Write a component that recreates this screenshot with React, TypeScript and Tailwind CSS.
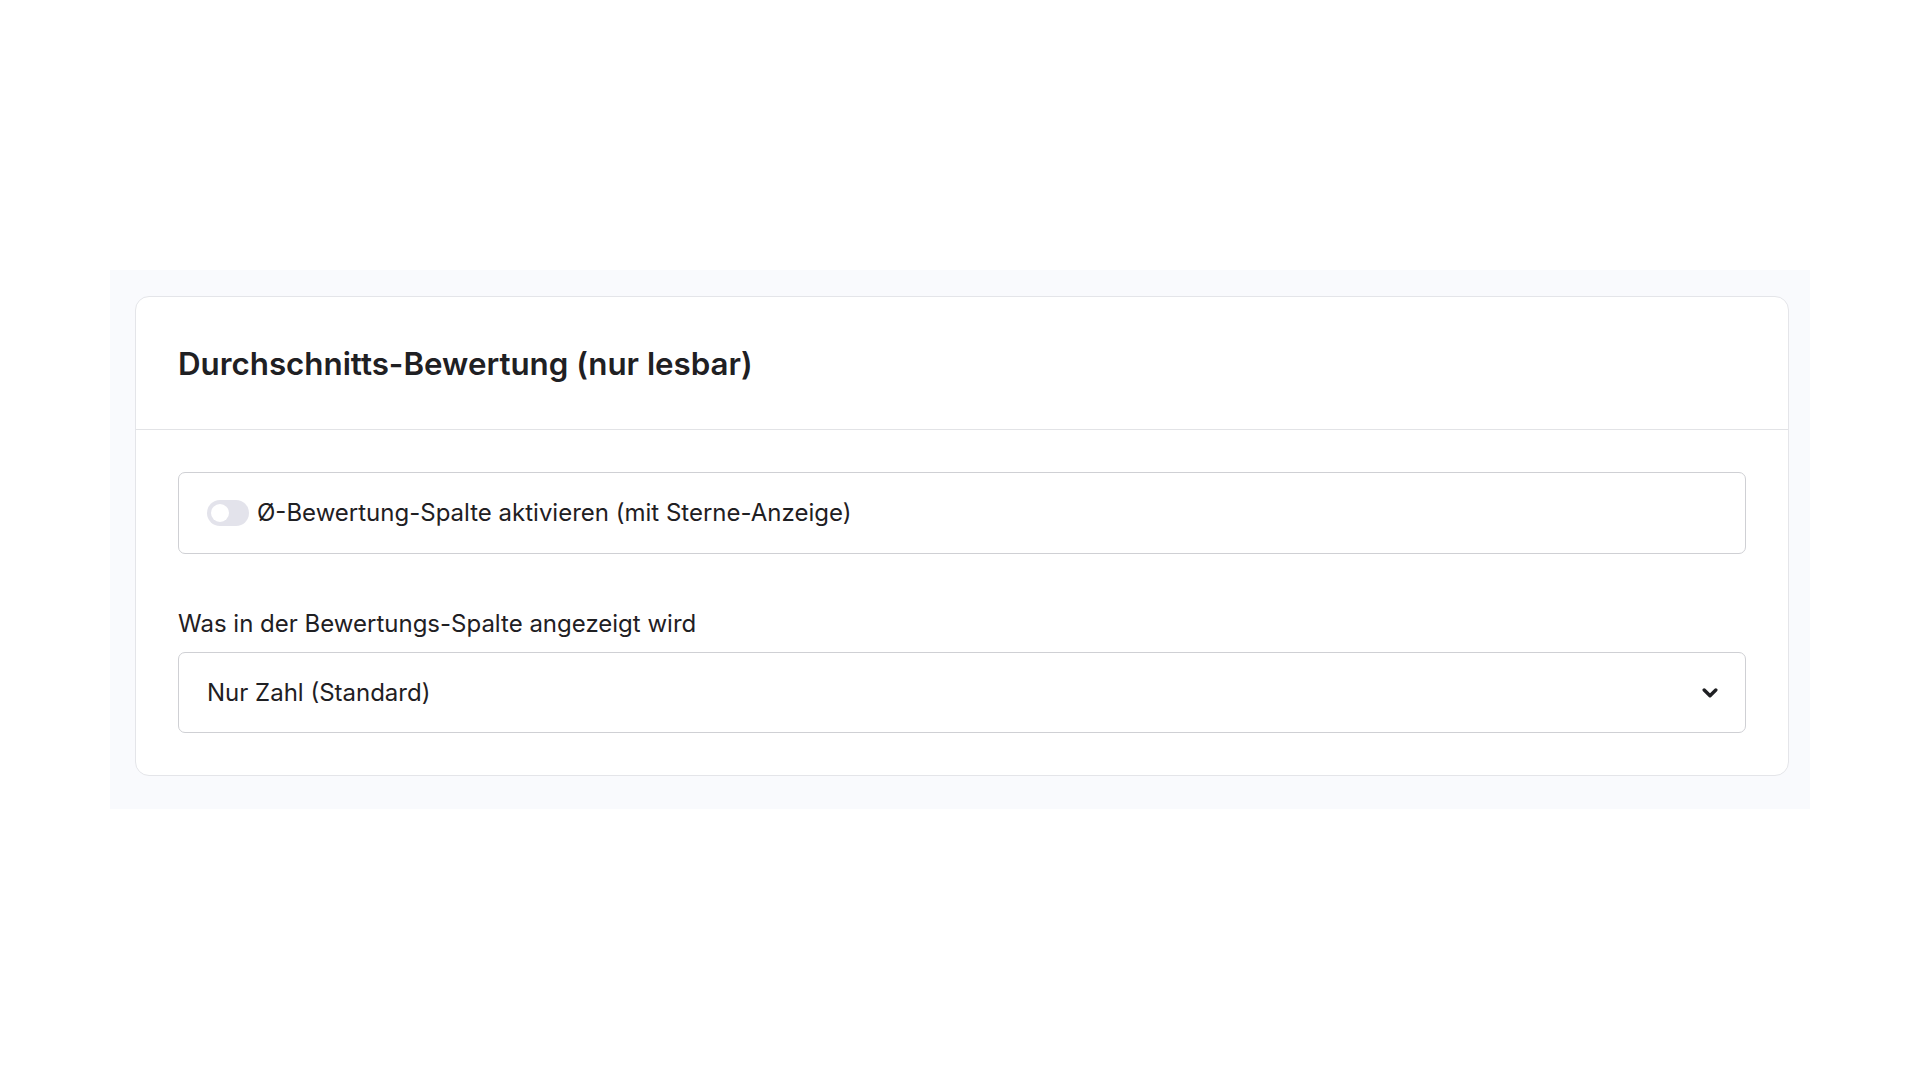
import { useState } from 'react';

const options = ['Nur Zahl (Standard)', 'Nur Sterne', 'Zahl und Sterne'];

function Chevron() {
  return (
    <svg
      viewBox="0 0 16 10"
      className="pointer-events-none absolute top-1/2 right-[28px] h-[10px] w-[16px] -translate-y-1/2 text-[#1f2023]"
      fill="none"
      stroke="currentColor"
      strokeWidth="3.4"
      strokeLinecap="round"
      strokeLinejoin="round"
    >
      <polyline points="2.2,2 8,7.8 13.8,2" />
    </svg>
  );
}

export default function App() {
  const [enabled, setEnabled] = useState(false);
  const [mode, setMode] = useState(options[0]);

  return (
    <div className="flex min-h-screen items-start justify-center bg-white pt-[270px] font-['Inter',sans-serif] text-[#1f2023]">
      <div className="w-[1700px] bg-[#f9fafd] pt-[26px] pb-[33px] pl-[25px] pr-[21px]">
        <div className="rounded-[14px] border border-[#e4e5e9] bg-white">
          {/* header */}
          <div className="flex h-[133px] items-center border-b border-[#e2e3e6] px-[42px] pt-[3px]">
            <h2 className="text-[31.3px] font-semibold leading-none">
              Durchschnitts-Bewertung (nur lesbar)
            </h2>
          </div>

          <div className="px-[42px] pt-[42px] pb-[42px]">
            {/* enable switch */}
            <label className="flex h-[82px] cursor-pointer items-center gap-[8px] rounded-[7px] border border-[#cfd0d4] px-[28px]">
              <button
                type="button"
                onClick={() => setEnabled(!enabled)}
                className={
                  enabled
                    ? 'relative h-[26px] w-[42px] shrink-0 rounded-full bg-[#4f46e5]'
                    : 'relative h-[26px] w-[42px] shrink-0 rounded-full bg-[#e3e3eb]'
                }
              >
                <span
                  className={
                    enabled
                      ? 'absolute top-[4px] left-[21px] h-[18px] w-[18px] rounded-full bg-white'
                      : 'absolute top-[4px] left-[4px] h-[18px] w-[18px] rounded-full bg-white'
                  }
                />
              </button>
              <span className="text-[24px] leading-none">
                Ø-Bewertung-Spalte aktivieren (mit Sterne-Anzeige)
              </span>
            </label>

            {/* display mode */}
            <div className="mt-[52px]">
              <div className="mb-[10px] text-[24px] leading-[36px]">
                Was in der Bewertungs-Spalte angezeigt wird
              </div>
              <div className="relative">
                <select
                  value={mode}
                  onChange={(e) => setMode(e.target.value)}
                  className="h-[81px] w-full appearance-none rounded-[7px] border border-[#cfd0d4] bg-white px-[28px] text-[24px] text-[#1f2023] outline-none"
                >
                  {options.map((o) => (
                    <option key={o} value={o}>
                      {o}
                    </option>
                  ))}
                </select>
                <Chevron />
              </div>
            </div>
          </div>
        </div>
      </div>
    </div>
  );
}
